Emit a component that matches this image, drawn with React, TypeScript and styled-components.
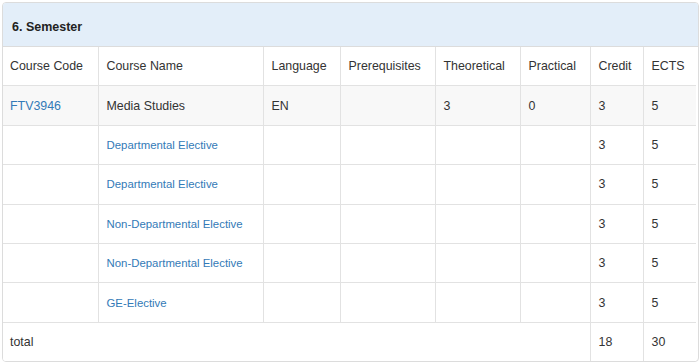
import styled, { createGlobalStyle } from 'styled-components';

const GlobalStyle = createGlobalStyle`
  body {
    margin: 0;
    background: #fff;
    font-family: 'Liberation Sans', Arial, sans-serif;
    color: #333;
  }
`;

const Page = styled.div`
  padding: 2px 2px 0 2px;
`;

const Panel = styled.div`
  width: 695px;
  border: 1px solid #dcdcdc;
  border-radius: 4px;
  overflow: hidden;
  background: #fff;
`;

const PanelHeading = styled.div`
  background: #e3eef9;
  padding: 14px 9px 9px;
  height: 20px;
  line-height: 20px;
  font-size: 12.5px;
  font-weight: bold;
  color: #222;
  border-bottom: 1px solid #dcdcdc;
`;

const Table = styled.table`
  width: 693px;
  border-collapse: collapse;
  table-layout: fixed;
  font-size: 12.4px;
`;

const Row = styled.tr<{ $striped?: boolean }>`
  background: ${(p) => (p.$striped ? '#f8f8f8' : '#fff')};
  &:last-child td {
    border-bottom: none;
  }
`;

const Cell = styled.td`
  height: 38.4px;
  padding: 0 8px;
  border: 1px solid #e2e2e2;
  border-top: none;
  vertical-align: middle;
  white-space: nowrap;
  &:first-child {
    border-left: none;
    padding-left: 7px;
  }
  &:last-child {
    border-right: none;
  }
`;

const HeadCell = styled(Cell).attrs({ as: 'th' })`
  font-weight: normal;
  text-align: left;
`;

const Link = styled.a<{ $small?: boolean }>`
  color: #337ab7;
  text-decoration: none;
  font-size: ${(p) => (p.$small ? '11.4px' : 'inherit')};
`;

const widths = [95, 165, 77, 95, 85, 70, 53, 53];
const headers = ['Course Code', 'Course Name', 'Language', 'Prerequisites', 'Theoretical', 'Practical', 'Credit', 'ECTS'];

const electives = [
  'Departmental Elective',
  'Departmental Elective',
  'Non-Departmental Elective',
  'Non-Departmental Elective',
  'GE-Elective',
];

export default function App() {
  return (
    <Page>
      <GlobalStyle />
      <Panel>
        <PanelHeading>6. Semester</PanelHeading>
        <Table>
          <colgroup>
            {widths.map((w, i) => (
              <col key={i} style={{ width: w }} />
            ))}
          </colgroup>
          <tbody>
            <Row>
              {headers.map((h) => (
                <HeadCell key={h}>{h}</HeadCell>
              ))}
            </Row>
            <Row $striped>
              <Cell><Link href="#">FTV3946</Link></Cell>
              <Cell>Media Studies</Cell>
              <Cell>EN</Cell>
              <Cell />
              <Cell>3</Cell>
              <Cell>0</Cell>
              <Cell>3</Cell>
              <Cell>5</Cell>
            </Row>
            {electives.map((name, i) => (
              <Row key={i}>
                <Cell />
                <Cell><Link href="#" $small>{name}</Link></Cell>
                <Cell />
                <Cell />
                <Cell />
                <Cell />
                <Cell>3</Cell>
                <Cell>5</Cell>
              </Row>
            ))}
            <Row>
              <Cell colSpan={6}>total</Cell>
              <Cell>18</Cell>
              <Cell>30</Cell>
            </Row>
          </tbody>
        </Table>
      </Panel>
    </Page>
  );
}
